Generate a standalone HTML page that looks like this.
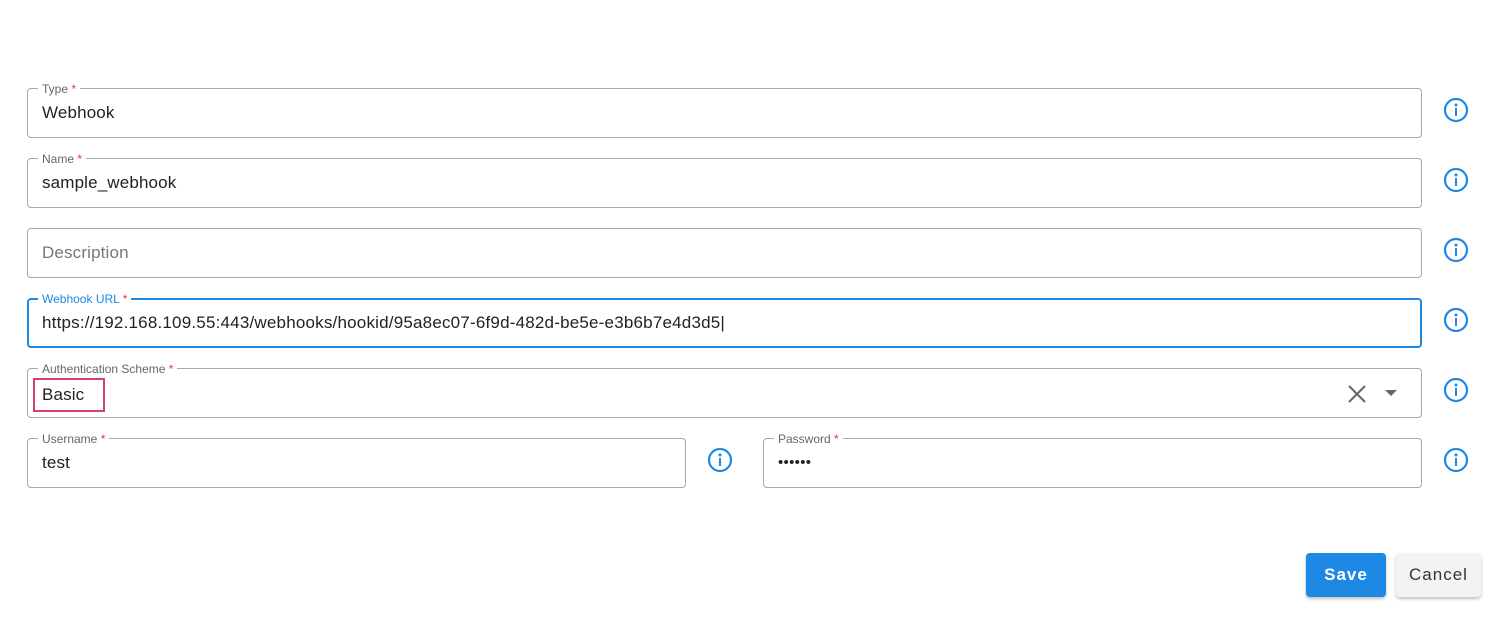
<!DOCTYPE html>
<html><head><style>
body{margin:0;width:1508px;height:624px;background:#fff;font-family:"Liberation Sans",Arial,sans-serif;position:relative;overflow:hidden}
.f{position:absolute;height:48px;border:1px solid #a8a8a8;border-radius:4px;box-sizing:content-box}
.f .l{position:absolute;top:-7px;left:10px;background:#fff;padding:0 4px;font-size:12px;color:#666;line-height:14px}
.f .l b{color:#e53935;font-weight:normal}
.f .v{position:absolute;left:14px;top:14px;font-size:17px;color:#222;line-height:20px;letter-spacing:0.15px}
.i{position:absolute;width:26px;height:26px}
.btn{position:absolute;top:553px;height:44px;border-radius:4px;font-size:17px;letter-spacing:1px;display:flex;align-items:center;justify-content:center}
</style></head><body>
<div class="f" style="left:27px;top:88px;width:1393px"><span class="l">Type <b>*</b></span><span class="v">Webhook</span></div>
<div class="f" style="left:27px;top:158px;width:1393px"><span class="l">Name <b>*</b></span><span class="v">sample_webhook</span></div>
<div class="f" style="left:27px;top:228px;width:1393px"><span class="v" style="color:#777">Description</span></div>
<div class="f" style="left:27px;top:298px;width:1391px;border:2px solid #1e88e5;height:46px"><span class="l" style="color:#1e88e5;top:-8px;left:9px">Webhook URL <b>*</b></span><span class="v" style="left:13px;top:13px;letter-spacing:0.2px">https://192.168.109.55:443/webhooks/hookid/95a8ec07-6f9d-482d-be5e-e3b6b7e4d3d5|</span></div>
<div class="f" style="left:27px;top:368px;width:1393px"><span class="l">Authentication Scheme <b>*</b></span><span class="v" style="top:16px">Basic</span>
<div style="position:absolute;left:5px;top:9px;width:68px;height:30px;border:2px solid #d0436a"></div>
<svg style="position:absolute;left:1318px;top:14px" width="22" height="22" viewBox="0 0 22 22"><path d="M3 3L19 19M19 3L3 19" stroke="#666" stroke-width="2"/></svg>
<svg style="position:absolute;left:1357px;top:21px" width="12" height="7"><path d="M0 0H12L6 6Z" fill="#666"/></svg></div>
<div class="f" style="left:27px;top:438px;width:657px"><span class="l">Username <b>*</b></span><span class="v">test</span></div>
<div class="f" style="left:763px;top:438px;width:657px"><span class="l">Password <b>*</b></span><span class="v" style="font-size:15px;letter-spacing:0.3px;top:14px">••••••</span></div>
<svg width="0" height="0" style="position:absolute"><defs><g id="ic"><circle cx="13" cy="13" r="11" fill="none" stroke="#1e88e5" stroke-width="2.2"/><circle cx="13" cy="8" r="1.5" fill="#1e88e5"/><rect x="12" y="11" width="2" height="8" fill="#1e88e5"/></g></defs></svg>
<svg class="i" style="left:1443px;top:97px"><use href="#ic"/></svg>
<svg class="i" style="left:1443px;top:167px"><use href="#ic"/></svg>
<svg class="i" style="left:1443px;top:237px"><use href="#ic"/></svg>
<svg class="i" style="left:1443px;top:307px"><use href="#ic"/></svg>
<svg class="i" style="left:1443px;top:377px"><use href="#ic"/></svg>
<svg class="i" style="left:707px;top:447px"><use href="#ic"/></svg>
<svg class="i" style="left:1443px;top:447px"><use href="#ic"/></svg>
<div class="btn" style="left:1306px;width:80px;background:#1e88e5;color:#fff;font-weight:bold;box-shadow:0 2px 3px rgba(0,0,0,.25)">Save</div>
<div class="btn" style="left:1396px;width:85px;background:#f3f3f3;color:#333;box-shadow:0 2px 3px rgba(0,0,0,.25)">Cancel</div>
</body></html>
